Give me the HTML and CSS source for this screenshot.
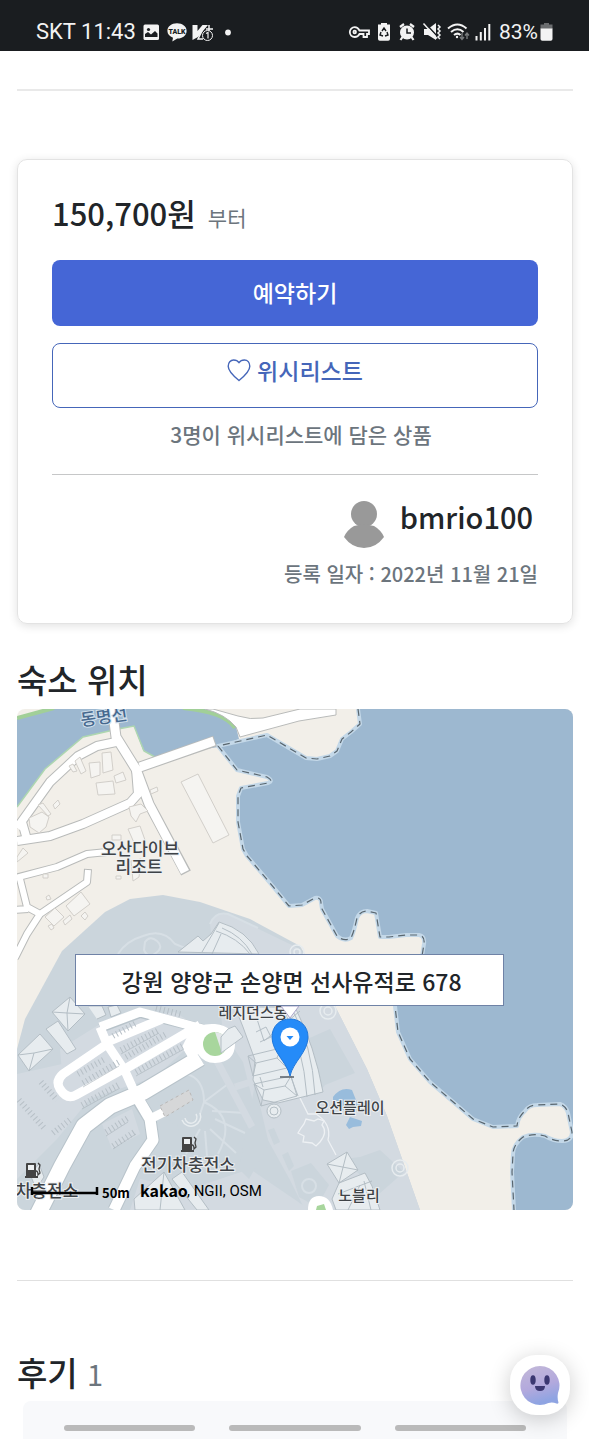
FILE: index.html
```html
<!DOCTYPE html>
<html lang="ko">
<head>
<meta charset="utf-8">
<meta name="viewport" content="width=device-width, initial-scale=1">
<title>숙소 예약</title>
<link rel="stylesheet" href="styles.css">
</head>
<body>
<header class="status">
  <div class="status-group">
    <span class="status-text">SKT 11:43</span>
    <svg width="92" height="20" viewBox="142 22 92 20" aria-hidden="true">
      <rect x="143.500" y="24.500" width="15.500" height="15.500" rx="1.500" fill="#f3f3f3"/>
      <circle cx="148.500" cy="29.500" r="1.600" fill="#1a1d20"/><path d="M145 37v-3l3-2 3 2.500 4-3.500 2.500 2.500v3.500z" fill="#1a1d20"/>
      <path d="M177 23.300c5.500 0 9.600 3.300 9.600 7.600s-4 7.600-9.300 7.600l-5 3 .7-3.800c-3.300-1.300-5.600-3.800-5.600-6.800 0-4.300 4.100-7.600 9.600-7.600z" fill="#f3f3f3"/>
      <text x="177" y="34" font-size="7" text-anchor="middle" class="talk">TALK</text>
      <path d="M192.500 25h5v6l5-6h5.500l-10 12-5.500 3z" fill="#f3f3f3"/><path d="M206 29h7M209 25v8M202 31l-4 8h5" stroke="#f3f3f3" fill="none" stroke-width="1.500"/>
      <circle cx="207.500" cy="35.500" r="5" fill="#1a1d20" stroke="#f3f3f3"/><path d="M206 33.500l2-1v6" stroke="#f3f3f3" fill="none" stroke-width="1.200"/>
      <circle cx="228" cy="32.500" r="2.900" fill="#f3f3f3"/>
    </svg>
  </div>
  <div class="status-group">
    <svg width="145" height="22" viewBox="348 21 145 22" aria-hidden="true">
      <g fill="none" stroke="#f3f3f3" stroke-width="1.800">
        <path d="M359.500 30.500h9.500v3.500h-2v3h-3.500v-3h-4c-1 2-2.600 3-4.800 3a4.900 4.900 0 1 1 0-9.800c2.200 0 3.800 1.200 4.800 3.300z"/>
        <circle cx="354.700" cy="32" r="1.300"/>
      </g>
      <path d="M381 23h6v1.500h3V39q0 1.800-1.800 1.800h-8.400Q378 40.800 378 39V24.500h3z" fill="#f3f3f3"/>
      <path d="M382 31l2-3 2 3M387 32l1 3-3 1M381 32l-1 3 3 1" stroke="#1a1d20" stroke-width="1.400" fill="none"/>
      <circle cx="407" cy="32.500" r="7" fill="#f3f3f3"/><path d="M400 27l4-3M414 27l-4-3M402.500 37l-2 3M411.500 37l2 3" stroke="#f3f3f3" stroke-width="2.200"/><path d="M407 28.500V33h4" stroke="#1a1d20" stroke-width="1.500" fill="none"/>
      <path d="M424 29h4l8-6v17l-8-5h-4z" fill="#f3f3f3"/><path d="M424.500 22.500l14 15" stroke="#1a1d20" stroke-width="1.500"/><path d="M423.500 23.500l13.500 15" stroke="#f3f3f3" stroke-width="1.500"/><path d="M438 25l2 2-2 2 2 2-2 2 2 2-2 2 2 2" stroke="#f3f3f3" stroke-width="1.500" fill="none"/>
      <g fill="none" stroke="#f3f3f3" stroke-width="2"><path d="M448 28.500q9.500-8 18.500 0M451 32q6.500-5.500 12.500 0M454 35q3.500-2.800 6.500 0"/></g><circle cx="457" cy="37" r="1.200" fill="#f3f3f3"/>
      <path d="M462 33v6M460 37l2 2.500 2-2.500M467 39v-6M465 35.500l2-2.500 2 2.500" fill="none" stroke="#777a7c" stroke-width="1.400"/>
      <path d="M476.500 36v4.500M480.800 32v8.500M485 28v12.500M489.300 24v16.500" stroke="#f3f3f3" stroke-width="2"/>
    </svg>
    <span class="status-text battery">83%</span>
    <svg width="13" height="18" viewBox="0 0 13 18" aria-hidden="true"><path d="M4 0h5v1.500h3.500V6H.500V1.500H4z" fill="#6b6d6f"/><path d="M.500 5.500h12V16q0 1.800-1.800 1.800H2.300Q.500 17.800.500 16z" fill="#f3f3f3"/></svg>
  </div>
</header>
<main class="page">
  <hr class="rule rule-thick">
  <section class="card">
    <p class="price"><strong class="amount">150,700원</strong><span class="from">부터</span></p>
    <button class="btn btn-primary" type="button">예약하기</button>
    <button class="btn btn-outline" type="button">
      <svg width="24" height="24" viewBox="0 0 24 24" fill="none" stroke="currentColor" stroke-width="1.400" aria-hidden="true"><path d="M12 22.500C7 18.500 1.200 13.500 1.200 8.300c0-3.700 2.300-6.300 5.400-6.300 2.400 0 4.300 1 5.400 2.600C13.100 3 15 2 17.400 2c3.100 0 5.400 2.600 5.400 6.300 0 5.200-5.800 10.200-10.800 14.200z"/></svg>
      <span>위시리스트</span>
    </button>
    <p class="count">3명이 위시리스트에 담은 상품</p>
    <hr class="card-rule">
    <div class="host">
      <svg width="40" height="47" viewBox="0 0 40 47" aria-hidden="true"><g fill="#999"><circle cx="20" cy="13" r="13"/><path d="M10 25Q20 22 30 25 37 29 40 36 32 47 20 47T0 36Q3 29 10 25z"/></g></svg>
      <span class="host-name">bmrio100</span>
    </div>
    <p class="date">등록 일자 : 2022년 11월 21일</p>
  </section>

  <h2 class="title">숙소 위치</h2>
  <div class="map">
    <svg class="map-art" viewBox="17 710 556 501" role="img" aria-label="숙소 위치 지도">
      <rect x="17" y="710" width="556" height="501" fill="#f2efe9"/>
      <!-- river -->
      <path d="M17 720L52 710H213L236 728 239 740 218 748 155 758 143 751 134 727 118 730 83 738 45 770 17 808z" fill="#9db8d0"/>
      <path d="M155 758l-11-6-10-25-16 3-35 8-38 32-28 38" fill="none" stroke="#add6b0" stroke-width="1.500"/>
      <path d="M17 719l37-10M183 709q42 4 52 20" fill="none" stroke="#a1cf98" stroke-width="4"/>
      <!-- sea -->
      <g fill="#9db8d0">
        <path d="M358 710L360 725 351 733 342 740 337 752 330 757 317 760 306 759 289 749 267 736 218 747 237 771 267 778Q274 782 268 784L241 789 238 797V823L243 850 247 857 270 884 289 907 302 906 315 899Q321 898 321 904L322 910 337 937Q344 943 351 939 354 933 357 919 360 912 367 912L376 914 380 938H389L406 936H419Q425 937 424 945L422 955 395 975V1007L398 1033 410 1060 430 1083 473 1120 493 1128 517 1127Q518 1118 525 1112 529 1106 537 1106L560 1105Q566 1107 568 1114L573 1133V710z"/>
        <path d="M573 1134Q572 1142 562 1142 553 1142 545 1137 533 1134 523 1138 513 1146 513 1155L512 1173 514 1211H573z"/>
      </g>
      <g fill="none" stroke-linejoin="round">
        <g stroke="#c4d8e8" stroke-width="4"><path d="M358 710L360 725 351 733 342 740 337 752 330 757 317 760 306 759 289 749 267 736 218 747 237 771 267 778Q274 782 268 784L241 789 238 797V823L243 850 247 857 270 884 289 907 302 906 315 899Q321 898 321 904L322 910 337 937Q344 943 351 939 354 933 357 919 360 912 367 912L376 914 380 938H389L406 936H419Q425 937 424 945L422 957M395 1000V1007L398 1033 410 1060 430 1083 473 1120 493 1128 517 1127Q518 1118 525 1112 529 1106 537 1106L560 1105Q566 1107 568 1114L572 1133Q572 1142 562 1142 553 1142 545 1137 533 1134 523 1138 513 1146 513 1155L512 1173 514 1211"/></g>
        <g stroke="#59666f" stroke-width="1.200" stroke-dasharray="7 5"><path d="M358 710L360 725 351 733 342 740 337 752 330 757 317 760 306 759 289 749 267 736 218 747 237 771 267 778Q274 782 268 784L241 789 238 797V823L243 850 247 857 270 884 289 907 302 906 315 899Q321 898 321 904L322 910 337 937Q344 943 351 939 354 933 357 919 360 912 367 912L376 914 380 938H389L406 936H419Q425 937 424 945L422 957M395 1000V1007L398 1033 410 1060 430 1083 473 1120 493 1128 517 1127Q518 1118 525 1112 529 1106 537 1106L560 1105Q566 1107 568 1114L572 1133Q572 1142 562 1142 553 1142 545 1137 533 1134 523 1138 513 1146 513 1155L512 1173 514 1211"/></g>
      </g>
      <!-- resort grounds -->
      <path d="M17 1050l8-30 37-68 43-39 25-13 33-4 37 7 50 17 50 27 35 60 32 63 20 47 33 94H17z" fill="#cbd5dc"/>
      <g fill="#d3dae1">
        <path d="M210 925q5-13 18-10l72 35 35 57 32 63 20 47 33 94H305l-15-30-32-58-15-60-20-30z"/>
        <path d="M17 1075l45-10 40 20-45 55-40 40zM60 1050l40-25 75-12 30 20-50 45-90 30zM102 1125l30-15 8 25-28 15z"/>
        <path d="M140 1180l50 10 60-20 60 41H130z"/>
      </g>
      <g fill="#cbd5dc">
        <path d="M330 1030l25 44-30 12-8 10-12-55zM360 1158l20-7 24 22-25 22-35-35zM255 1085l14 60-20 35-10-10z"/>
        <path d="M268 1131l6-2 6 14-6 3zM282 1156l6-3 6 14-5 5zM291 1172l20-8 18 22-12 22-18-10z"/>
        <circle cx="212" cy="1121" r="35"/><path d="M150 1090l45-25 28-1 20 27-30 15-40 20z"/>
      </g>
      <g fill="none" stroke="#d7dfe5" stroke-width="2">
        <path d="M118 955q8-13 25-18 20-8 32 8l15 6M145 943q5-7 12-1t-1 12-12-3zM210 925q5-13 18-10 15 7 30 14M186 1075q18 4 18 28l-4 12M204 1103l24-18M200 1130l-14 25M205 1132l2 25M210 1130l26 24M215 1120l30 14M212 1112l34 2M204 1103q34 15 14 52"/><circle cx="309" cy="1187" r="7"/>
      </g>
      <path d="M217 1062l35 66M235 1088l22-7" stroke="#d3dae1" stroke-width="7"/>
      <path d="M298 1095l10 20h8q16 10 12 26l8 15" fill="none" stroke="#eef1f4" stroke-width="1.300"/><path d="M301 1129l-3 5 6 3-1 6 9 1 4 3 4-4q8-10 2-17l2-4-6-2-4 2-8-2-2 5z" fill="none" stroke="#eef1f4" stroke-width="1.300"/>
      <g fill="none" stroke="#e7ecef" stroke-width="1.500"><circle cx="328" cy="1012" r="8"/><circle cx="328" cy="1012" r="4"/><circle cx="400" cy="1169" r="8"/><circle cx="400" cy="1169" r="4"/><circle cx="297" cy="953" r="7"/><circle cx="297" cy="953" r="3"/><path d="M182 1121a9 9 0 1 0 18-7"/><path d="M185 1119a6 6 0 1 0 11-4"/></g>
      <path d="M333 1098q8-11 19-7l4 10 5 5-9 8-19-7zM346 1126l4-8 12 4-1 5-8 1-4 2z" fill="#98bcdc"/>

      <!-- street casings, then streets -->
      <g fill="none" stroke="#b9bbba" stroke-linejoin="round">
        <g stroke-width="11"><path d="M111 700l5 38 20 32 13 35 37 69M140 768l75-26"/></g>
        <g stroke-width="10"><path d="M116 743l-19 4-19 10-28 26-33 46M136 770l2 25-8 9-47 21-33 12-33 5M22 823l4 14"/></g>
        <g stroke-width="8"><path d="M15 879l42-11 30-13 20-2M20 880l7 28 13 7 47-32 1-13M40 915l-13 20-12 24M15 911l13-1"/></g>
      </g>
      <path d="M213 710l25 7q12 4 25 2l37-9h36v6l-37 6-59 16-4-10q-11-13-31-18z" fill="#fff" stroke="#b9bbba"/>
      <g fill="none" stroke="#fff" stroke-linejoin="round">
        <g stroke-width="9"><path d="M111 700l5 38 20 32 13 35 36 68M140 768l74-26"/></g>
        <g stroke-width="8"><path d="M116 743l-19 4-19 10-28 26-33 46M136 770l2 25-8 9-47 21-33 12-33 5M22 823l4 14"/></g>
        <g stroke-width="6"><path d="M15 879l42-11 30-13 20-2M20 880l7 28 13 7 47-32 1-12M40 915l-13 20-12 24M15 911l13-1"/></g>
      </g>
      <g fill="none" stroke="#b8c3ca" stroke-linejoin="round"><path d="M100 1029l40-15 63 16" stroke-width="10"/><path d="M38 1215l24-48 22-40 26-20 33-14 57-34" stroke-width="18"/><path d="M135 1096l15 24 3 21-18 26-21 44" stroke-width="13"/></g>
      <g fill="none" stroke="#fff" stroke-linejoin="round">
        <path d="M100 1028l40-15 63 17M100 1028l7 17 18 27 9 20M107 1043l55-23M125 1070l75-44M107 1045l-44 30q-8 7-3 15 7 11 16 6l49-27" stroke-width="9"/>
        <path d="M38 1215l24-48 22-40 26-20 33-14 57-34" stroke-width="16"/>
        <path d="M134 1093l16 27 3 21-18 26-21 44" stroke-width="11"/>
        <path d="M150 1120l14-7" stroke-width="9"/>
      </g>
      <path d="M190 1032q10-8 25-7 20 2 20 20t-20 19q-11 0-17-9l-9 5-7-12z" fill="#fff"/>
      <circle cx="215" cy="1045" r="12" fill="#a8d69d"/><path d="M215 1033q12 1 12 12 0 6-5 9z" fill="#e4e8ea"/>
      <!-- parking bays -->
      <g fill="none" stroke="#b6bfc6" stroke-width="6" stroke-dasharray="1 3">
        <path d="M113 1037l23-13M121 1051l38-20M126 1058l40-23M136 1073l48-27M78 1075l27-15M83 1084l36-21M82 1106l38-21M106 1133l22-14M113 1147l23-15M41 1083l16 18M19 1101l25 28M53 1134l18-14M156 1009l27 7"/>
      </g>
      <g fill="none" stroke="#aab3ba" stroke-width=".600"><path d="M121 1055l38-21M136 1077l48-27M83 1088l36-21M82 1110l38-21M106 1137l22-14M113 1150l23-15"/></g>
      <path d="M160 1107l29-16 4 10-28 17z" fill="#d6d7d8" stroke="#b9b7b6" stroke-dasharray="3 3"/>
      <!-- buildings -->
      <g fill="#f5f4f1" stroke="#d2cfca" stroke-width="1">
        <path d="M181 783l17-8 31 61-16 8zM102 754l9-1 2 18-10 3zM89 764l11-1v13l-9 3zM96 784l17-2 2 13-17 1zM75 762l5-4 6 14-5 3zM114 777l9-4 3 8-10 3zM150 791l7-3 1 4-7 3zM69 767l4-2 4 7-4 1z"/>
        <path d="M29 819l13-6 7 5-3 10-7 6-9-6zM38 806l5-2 8 11-3 2zM53 806l5-5 2 4-5 5zM129 808l12-3 7 7-8 3-4 8-5-6zM128 830l12-3 5 14-10 5zM112 836h9v5h-9z"/>
        <path d="M66 907l15-14 9 12-16 12zM45 918l10-9 9 9-10 9zM63 922l7-6 2 4-7 6zM48 927l4-2 2 4-3 2zM81 917l4-4 3 4-3 4zM17 858l6-9 5 5-11 9zM46 898l3-2 2 4-4 1zM131 862l10-2-2 18-6 4zM43 875h5v4h-5zM116 877h5v3h-5z"/>
      </g>
      <g fill="#e7ecef" stroke="#b4bec5" stroke-width="1">
        <path d="M52 1013l18-15 15 17-17 17zM46 1030l12-8 18 28-9 5zM18 1056l22-21 13 15-24 22zM29 1072l5-18 19-4M34 1054l-16 2M52 1013l15 1 18 1M67 1014l3-16M67 1014l1 18M88 1007h14l4 9-9 4M108 1008l9-2 4 8-10 4z"/>
        <path d="M178 953l20-16 5 5 8-7 8-12q28 8 40 32z"/>
        <path d="M202 953l17-29M212 955l9-20M216 932q22 7 34 23M222 929q20 8 30 26" fill="none"/>
        <path d="M221 1038l7-8 7-3 8 11-22 16zM235 1008h60q20 40 28 85l-45 11-15-3-10-20 2-20-12-33z"/>
        <path d="M248 1057l33-8 6 20-34 8zM254 1085l37-8 6 20-36 10zM248 1057l8 7 21-5 4-10M253 1077l3-13M287 1069l-10-10M254 1085l10 6 21-4 6-10M261 1107l3-16M297 1097l-12-10M260 1078l3 10M283 1010q20 35 24 88M292 1010q20 35 23 86M300 1012l-36 30-7-22M256 1033l10-5 5 10-11 5M288 1070l10 27" fill="none"/>
        <circle cx="274" cy="1112" r="7"/><circle cx="274" cy="1112" r="4"/>
        <path d="M327 1165l20-12 11 18-19 13zM327 1165l31 6M347 1153l-8 31M339 1184l26-10 7 13 8 24h-44l-4-11zM338 1195l34-13M348 1211l12-25M364 1182l7 29"/>
        <path d="M134 1200l30-27 21 38h-50zM164 1173l-4 38M172 1180l10-7 27 38h-12zM30 1175l9-10 5 13-8 12z"/>
      </g>
      <path d="M308 1211q0-14 11-14t14 14z" fill="#fff"/><path d="M317 1207l7-2 2 6h-10z" fill="#a8d69d"/>
      <!-- charging stations -->
      <g id="pump" fill="#444"><path d="M182 1139q0-1 1-1h8q1 0 1 1v13h-10z"/><path d="M181 1151h13v2h-13z"/><path d="M184 1140h6v5h-6z" fill="#eef1f3"/><path d="M192 1146q2 0 2 4l2-2-1-4 1-4-2-2" fill="none" stroke="#444" stroke-width="1.300"/></g>
      <use href="#pump" x="-156" y="26"/>
      <g class="label">
        <text x="140" y="856" font-size="17">오산다이브</text><text x="139" y="874" font-size="17">리조트</text>
        <text x="253" y="1019" font-size="15">레지던스동</text><text x="350" y="1114" font-size="15">오션플레이</text>
        <text x="188" y="1172" font-size="17">전기차충전소</text><text x="47" y="1198" font-size="17">차충전소</text>
        <text x="359" y="1202" font-size="15">노블리</text>
        <text x="104" y="724" font-size="17" class="label-river" transform="rotate(-8 104 718)">동명선</text>
      </g>
      <path d="M32 1188v8M97 1188v8M32 1194h65" stroke="#000" stroke-width="2.500" fill="none"/>
      <g class="credit"><text x="102" y="1199" font-size="13" class="bold">50m</text><text x="140" y="1198" font-size="16" class="bold">kakao</text><text x="187" y="1197" font-size="15" class="sources">, NGII, OSM</text></g>
      <path d="M281 1007h18l-9 12z" fill="#fff" stroke="#aaa3c9"/>
      <path d="M280 1078h14" stroke="#59616a" stroke-width="1.500"/>
      <path d="M290 1077c-3-14-18-24-18-39 0-11 8-18 18-18s18 7 18 18c0 15-15 25-18 39z" fill="#258bf8" stroke="#2178db"/>
      <circle cx="290" cy="1038" r="9.500" fill="#fff"/><path d="M286.500 1037h7l-3.500 4z" fill="#258bf8"/>
    </svg>
    <div class="address">강원 양양군 손양면 선사유적로 678</div>
  </div>
  <hr class="rule rule-thin">
  <h2 class="title title-reviews">후기 <span class="total">1</span></h2>
  <section class="reviews" aria-label="후기 평점">
    <span class="bar"></span><span class="bar"></span><span class="bar"></span>
  </section>
</main>
<button class="chat" type="button" aria-label="채팅 상담">
  <svg width="44" height="44" viewBox="0 0 44 44" aria-hidden="true">
    <defs><linearGradient id="face" x1="0" y1="0" x2=".3" y2="1"><stop offset="0" stop-color="#c3b9d8"/><stop offset=".600" stop-color="#b3a9dd"/><stop offset="1" stop-color="#8fa4e2"/></linearGradient></defs>
    <path d="M22 3a19.500 19.500 0 0 1 18 27q-1 5 .5 9.500 0 1.500-2 1-4-1.500-8-.5A19.500 19.500 0 1 1 22 3z" fill="url(#face)"/>
    <ellipse cx="15" cy="17" rx="2.700" ry="4.700" fill="#3b3771"/><ellipse cx="29" cy="17" rx="2.700" ry="4.700" fill="#3b3771"/><path d="M17 23h10q0 5-5 5t-5-5z" fill="#3b3771"/>
  </svg>
</button>
</body>
</html>
```
FILE: styles.css
```css
* { box-sizing: border-box; }

body {
  margin: 0;
  background: #fff;
  color: #212529;
  font-family: "Noto Sans CJK KR", "Noto Sans", sans-serif;
  font-weight: 500;
}

p, h2 { margin: 0; }
hr { border: 0; margin: 0; }
button { font: inherit; cursor: pointer; }

.status {
  display: flex;
  justify-content: space-between;
  align-items: flex-end;
  height: 51px;
  padding: 0 36px 8px;
  background: #1a1d20;
  color: #f3f3f3;
}
.status-group { display: flex; align-items: center; gap: 6px; }
.status-group:last-child { gap: 2px; }
.status-text {
  font-family: Roboto, sans-serif;
  font-size: 22px;
  font-weight: 400;
  line-height: 22px;
}
.battery { margin-left: 4px; font-size: 21px; }
.talk { font-family: Roboto, sans-serif; font-weight: 900; fill: #1a1d20; }

.page { padding: 38px 16px 0 17px; }
.rule { background: #e9e9e9; }
.rule-thick { height: 2px; }
.rule-thin { height: 1px; margin-top: 70px; background: #e0e0e0; }

.card {
  margin-top: 68px;
  padding: 31px 34px 33px;
  border: 1px solid #e3e3e3;
  border-radius: 10px;
  box-shadow: 0 2px 10px rgba(0, 0, 0, .12);
}
.price { display: flex; align-items: baseline; gap: 12px; line-height: 44px; }
.amount { font-size: 31px; font-weight: 500; }
.from { color: #6c757d; font-size: 21px; font-weight: 400; }

.btn {
  display: flex;
  justify-content: center;
  align-items: center;
  width: 100%;
  border-radius: 8px;
  font-size: 23px;
  line-height: 32px;
}
.btn-primary {
  height: 66px;
  margin-top: 21px;
  padding: 0 0 2px;
  border: 0;
  background: #4566d6;
  color: #fff;
}
.btn-outline {
  height: 65px;
  margin-top: 17px;
  padding: 0 0 12px;
  gap: 6px;
  border: 1px solid #4566b9;
  background: #fff;
  color: #4566b9;
}
.count {
  margin-top: 10px;
  padding-left: 12px;
  color: #6c757d;
  font-size: 21px;
  line-height: 32px;
  text-align: center;
}
.card-rule { height: 1px; margin-top: 24px; background: #c6c7c8; }
.host {
  display: flex;
  justify-content: flex-end;
  align-items: center;
  gap: 16px;
  margin-top: 25px;
  padding-right: 5px;
}
.host-name { font-size: 29px; line-height: 32px; padding-bottom: 16px; }
.date {
  margin-top: 10px;
  color: #6c757d;
  font-size: 20px;
  line-height: 32px;
  text-align: right;
}

.title {
  margin-top: 33px;
  font-size: 33px;
  font-weight: 500;
  line-height: 44px;
}
.map {
  position: relative;
  margin-top: 8px;
  border-radius: 8px;
  overflow: hidden;
}
.map-art { display: block; width: 100%; height: auto; }
.label {
  fill: #3f4347;
  stroke: #eef1f3;
  stroke-width: 2px;
  paint-order: stroke;
  text-anchor: middle;
}
.label-river { fill: #46698f; stroke: #d2e0ec; }
.credit { fill: #000; font-weight: 400; }
.bold { font-weight: 700; }
.sources { font-family: Roboto, sans-serif; }
.address {
  position: absolute;
  top: 245px;
  left: 58px;
  right: 69px;
  padding: 10px 4px 8px 8px;
  border: 1px solid #6f82a6;
  background: #fff;
  font-size: 23px;
  line-height: 32px;
  text-align: center;
}

.title-reviews { margin-top: 69px; }
.total { color: #6c757d; font-size: 29px; font-weight: 400; }
.reviews {
  display: grid;
  grid-template-columns: repeat(3, 1fr);
  gap: 34px;
  margin: 6px 6px 0;
  padding: 24px 41px 8px;
  border-radius: 8px 8px 0 0;
  background: #f8f9fb;
}
.bar { height: 6px; border-radius: 3px; background: #bababa; }

.chat {
  position: fixed;
  right: 19px;
  bottom: 25px;
  display: flex;
  justify-content: center;
  align-items: center;
  width: 60px;
  height: 60px;
  padding: 0;
  border: 0;
  border-radius: 26px;
  background: #fff;
  box-shadow: 0 4px 22px rgba(0, 0, 0, .2);
}
```
